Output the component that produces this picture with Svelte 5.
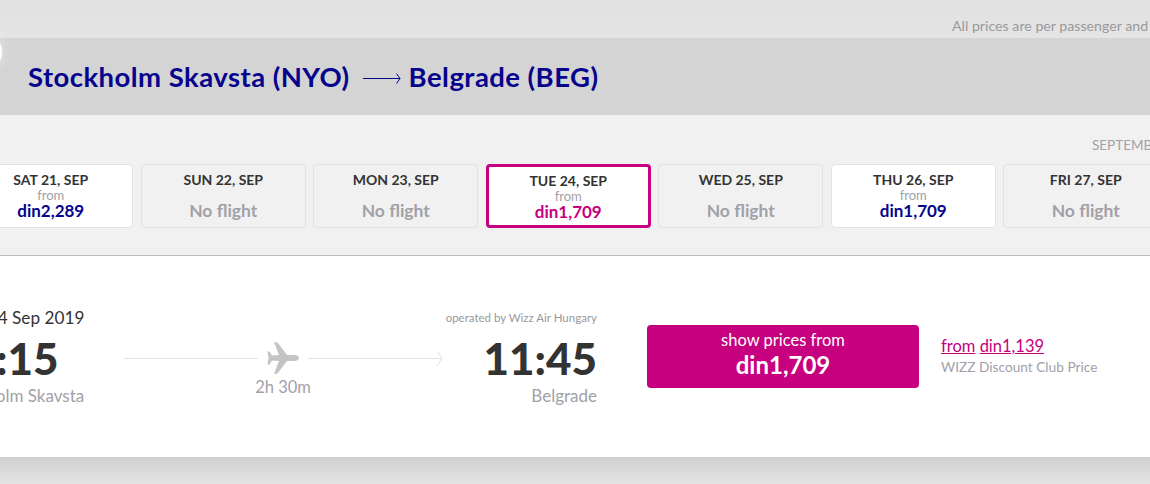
<script>
	const days = [
		{ label: "SAT 21, SEP", price: "din2,289" },
		{ label: "SUN 22, SEP" },
		{ label: "MON 23, SEP" },
		{ label: "TUE 24, SEP", price: "din1,709", selected: true },
		{ label: "WED 25, SEP" },
		{ label: "THU 26, SEP", price: "din1,709" },
		{ label: "FRI 27, SEP" }
	];
</script>

<div class="page">
	<div class="notice">All prices are per passenger and include taxes and fees</div>

	<header class="route">
		<span class="route-badge"></span>
		<h1>Stockholm Skavsta (NYO)</h1>
		<svg class="route-arrow" width="38" height="12" viewBox="0 0 38 12" fill="none" stroke="#06038d">
			<path d="M0 6.5h37" />
			<path d="M33.5 1.5 37 6.5l-3.5 5" />
		</svg>
		<h1>Belgrade (BEG)</h1>
	</header>

	<section class="dates">
		<div class="month">SEPTEMBER</div>
		<div class="day-row">
			{#each days as day}
				<div class="day" class:available={day.price} class:selected={day.selected}>
					<div class="day-label">{day.label}</div>
					{#if day.price}
						<div class="from">from</div>
						<div class="price">{day.price}</div>
					{:else}
						<div class="no-flight">No flight</div>
					{/if}
				</div>
			{/each}
		</div>
	</section>

	<section class="flight">
		<div class="leg">
			<div class="date">Tues, 24 Sep 2019</div>
			<div class="time">09:15</div>
			<div class="city">Stockholm Skavsta</div>
		</div>

		<div class="duration">
			<div class="track">
				<span class="line"></span>
				<svg class="plane" width="32" height="32" viewBox="0 0 32 32" fill="#c4c4c4">
					<path d="M7 0 10.5 0.5 20 13 27.5 13C30 13 32 14.5 32 16S30 19 27.5 19L20 19 10.5 31.5 7 32 12 19 5 18.5 2.5 22.5 0.5 22.5 1.5 16 0.5 9.5 2.5 9.5 5 13.5 12 13Z" />
				</svg>
				<span class="line arrow"></span>
			</div>
			<div class="length">2h 30m</div>
		</div>

		<div class="leg arrival">
			<div class="operator">operated by Wizz Air Hungary</div>
			<div class="time">11:45</div>
			<div class="city">Belgrade</div>
		</div>

		<button class="show-prices">
			<span class="show-label">show prices from</span>
			<span class="show-price">din1,709</span>
		</button>

		<div class="club">
			<div class="club-price"><a href="#top">from</a> <a href="#top">din1,139</a></div>
			<div class="club-label">WIZZ Discount Club Price</div>
		</div>
	</section>

	<div class="shadow"></div>
</div>

<style>
	:global(body) {
		margin: 0;
		overflow: hidden;
	}

	.page {
		width: 1150px;
		height: 484px;
		overflow: hidden;
		background: #e4e4e4;
		font-family: Lato, "Liberation Sans", sans-serif;
		color: #333;
	}

	.notice {
		height: 38px;
		box-sizing: border-box;
		padding: 17px 0 0 952px;
		background: linear-gradient(#e1e1e1, #e5e5e5);
		font-size: 14.2px;
		line-height: 18px;
		color: #999;
		white-space: nowrap;
	}

	.route {
		position: relative;
		display: flex;
		align-items: center;
		height: 77px;
		padding-left: 28px;
		background: #d4d4d4;
	}

	.route-badge {
		position: absolute;
		top: -6px;
		left: -38px;
		width: 40px;
		height: 40px;
		border-radius: 50%;
		background: #fff;
		box-shadow: 0 0 10px rgba(255, 255, 255, 0.5);
	}

	.route h1 {
		margin: 0;
		font-size: 27.5px;
		font-weight: 700;
		line-height: 34px;
		letter-spacing: 0.45px;
		color: #06038d;
		white-space: nowrap;
	}

	.route-arrow {
		margin: 2px 8px 0 13px;
		flex-shrink: 0;
	}

	.dates {
		height: 141px;
		box-sizing: border-box;
		padding-top: 21px;
		background: #f1f1f1;
		border-bottom: 1px solid #bbb;
	}

	.month {
		padding-left: 1092px;
		font-size: 13.5px;
		line-height: 18px;
		color: #a1a1a8;
		white-space: nowrap;
	}

	.day-row {
		display: flex;
		gap: 7.5px;
		margin: 10px 0 0 -31.75px;
	}

	.day {
		flex: 0 0 165px;
		box-sizing: border-box;
		height: 64px;
		padding-top: 7px;
		border: 1px solid #e2e2e2;
		border-radius: 4px;
		text-align: center;
	}

	.day.available {
		background: #fff;
	}

	.day.selected {
		padding-top: 6px;
		background: #fff;
		border: 3px solid #c6007e;
	}

	.day-label {
		font-size: 14px;
		font-weight: 700;
		line-height: 16px;
		color: #333;
	}

	.from {
		font-size: 13px;
		line-height: 14px;
		color: #a1a1a8;
	}

	.price {
		font-size: 17px;
		font-weight: 700;
		line-height: 17px;
		color: #06038d;
	}

	.selected .price {
		color: #c6007e;
	}

	.no-flight {
		margin-top: 12px;
		font-size: 17.5px;
		font-weight: 700;
		line-height: 22px;
		color: #a1a1a8;
	}

	.flight {
		display: flex;
		box-sizing: border-box;
		width: 1205px;
		height: 201px;
		margin-left: -55px;
		padding-top: 52px;
		background: #fff;
	}

	.leg {
		width: 179px;
		flex-shrink: 0;
		white-space: nowrap;
	}

	.date {
		font-size: 17.2px;
		line-height: 20px;
		color: #333;
	}

	.time {
		margin-top: 4px;
		font-size: 44px;
		font-weight: 900;
		line-height: 52px;
		color: #333;
	}

	.city {
		margin-top: 1px;
		font-size: 17px;
		line-height: 22px;
		color: #a1a1a8;
	}

	.duration {
		width: 318px;
		flex-shrink: 0;
		margin-top: 34px;
	}

	.track {
		display: flex;
		align-items: center;
		gap: 9px;
		height: 32px;
	}

	.line {
		position: relative;
		flex: 1;
		height: 1px;
		background: #e2e2e2;
	}

	.arrow::after {
		content: "";
		position: absolute;
		right: 0;
		top: -4px;
		width: 8px;
		height: 8px;
		border-top: 1px solid #e2e2e2;
		border-right: 1px solid #e2e2e2;
		transform: rotate(45deg) skew(12deg, 12deg);
	}

	.plane {
		flex-shrink: 0;
	}

	.length {
		margin-top: 3px;
		font-size: 16.5px;
		line-height: 20px;
		text-align: center;
		color: #a1a1a8;
	}

	.arrival {
		width: 155px;
		text-align: right;
	}

	.operator {
		font-size: 11.5px;
		line-height: 20px;
		color: #999;
	}

	.show-prices {
		display: flex;
		flex-direction: column;
		align-items: center;
		flex-shrink: 0;
		box-sizing: border-box;
		width: 272px;
		height: 63px;
		margin: 17px 0 0 50px;
		padding: 6px 0 0;
		border: none;
		border-radius: 4px;
		background: #c6007e;
		color: #fff;
		font-family: inherit;
	}

	.show-label {
		font-size: 16.5px;
		line-height: 19px;
	}

	.show-price {
		margin-top: 1px;
		font-size: 24px;
		font-weight: 700;
		line-height: 28px;
	}

	.club {
		margin: 27px 0 0 22px;
		white-space: nowrap;
	}

	.club-price {
		font-size: 16.5px;
		line-height: 23px;
	}

	.club-price a {
		color: #c6007e;
	}

	.club-label {
		font-size: 13.7px;
		line-height: 18px;
		color: #a1a1a8;
	}

	.shadow {
		height: 27px;
		background: linear-gradient(#cfcfcf, #e4e4e4);
	}
</style>
